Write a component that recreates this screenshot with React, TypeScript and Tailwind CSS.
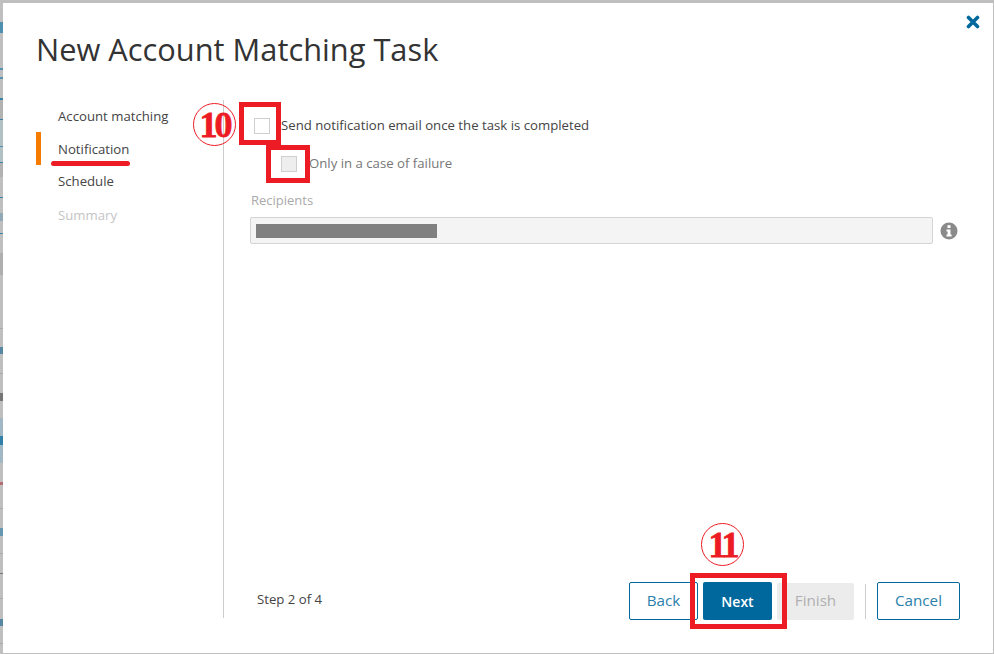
const font = "font-['Open_Sans',sans-serif]";

const slivers = [
  'top-[22px] h-[11px] bg-[#1f7aa8]',
  'top-[68px] h-[2px] bg-[#2a7fab]',
  'top-[77px] h-[2px] bg-[#2a7fab]',
  'top-[98px] h-[2px] bg-[#00689d]',
  'top-[100px] h-[19px] bg-[#adadad]',
  'top-[119px] h-px bg-[#00689d]',
  'top-[120px] h-[42px] bg-[#a9c0c4]',
  'top-[146px] h-px bg-[#2a7fab]',
  'top-[162px] h-px bg-[#00689d]',
  'top-[163px] h-[14px] bg-[#adadad]',
  'top-[197px] h-px bg-[#00689d]',
  'top-[213px] h-[8px] bg-[#7f9fb0]',
  'top-[233px] h-px bg-[#00689d]',
  'top-[253px] h-[22px] bg-[#a8a8a8]',
  'top-[328px] h-px bg-[#a0a0a0]',
  'top-[347px] h-[7px] bg-[#2a6f95]',
  'top-[373px] h-px bg-[#a0a0a0]',
  'top-[393px] h-[8px] bg-[#555555]',
  'top-[418px] h-[45px] bg-[#94b3c4]',
  'top-[436px] h-[9px] bg-[#00689d]',
  'top-[482px] h-[3px] bg-[#b04a50]',
  'top-[508px] h-px bg-[#a0a0a0]',
  'top-[528px] h-[8px] bg-[#3f86aa]',
  'top-[553px] h-px bg-[#a0a0a0]',
  'top-[573px] h-px bg-[#555555]',
  'top-[598px] h-px bg-[#a0a0a0]',
  'top-[619px] h-[7px] bg-[#2a6f95]',
  'top-[643px] h-px bg-[#a0a0a0]',
];

function Circled({ n, className }: { n: string; className: string }) {
  return (
    <div className={`absolute w-[43px] h-[43px] rounded-full border-[1.5px] border-[#ed1c24] flex items-center justify-center text-[#ed1c24] text-[36px] font-bold tracking-[-3px] font-['Liberation_Serif',serif] [-webkit-text-stroke:0.8px_#ed1c24] ${className}`}>
      {n}
    </div>
  );
}

function Box({ className }: { className: string }) {
  return <div className={`absolute border-[5px] border-[#ed1c24] ${className}`} />;
}

function Check({ disabled }: { disabled?: boolean }) {
  return <div className={`w-4 h-4 border border-[#cfcfcf] shrink-0 ${disabled ? 'bg-[#eeeeee]' : 'bg-white'}`} />;
}

export default function App() {
  return (
    <div className={`relative w-[994px] h-[654px] bg-[#bfbfbf] overflow-hidden pt-[3px] pl-[3px] pr-px pb-px ${font}`}>
      {slivers.map((s) => (
        <div key={s} className={`absolute left-0 w-[3px] opacity-70 ${s}`} />
      ))}
      <div className="relative w-full h-full bg-white flex flex-col">
        <div className="flex justify-between pl-[33px] pr-[13px] h-[97px] shrink-0">
          <h1 className="text-[30.8px] leading-[40px] mt-[26px] text-[#333333]">New Account Matching Task</h1>
          <svg className="mt-[12px]" width="14" height="14" viewBox="0 0 14 14">
            <path d="M2.5 2.5 L11.5 11.5 M11.5 2.5 L2.5 11.5" stroke="#00689d" strokeWidth="3.6" strokeLinecap="round" />
          </svg>
        </div>
        <div className="flex flex-1 pb-[35px]">
          <nav className="w-[188px] ml-[33px] text-[13.2px] leading-[18px] text-[#444444] shrink-0 border-r border-[#cccccc]">
            <div className="pl-[22px] h-[32px] pt-[7px]">Account matching</div>
            <div className="pl-[17px] border-l-[5px] border-[#f57c00] h-[33px] pt-[8px]">Notification</div>
            <div className="pl-[22px] h-[33px] pt-[7px]">Schedule</div>
            <div className="pl-[22px] h-[33px] pt-[8px] text-[#c4c4c4]">Summary</div>
          </nav>
          <div className="flex-1 flex flex-col pl-[26px] pr-[35px] pt-[17px]">
            <div className="flex items-center h-[18px] ml-[4px] text-[13.2px] text-[#444444] gap-[11px]">
              <Check />
              <span>Send notification email once the task is completed</span>
            </div>
            <div className="flex items-center h-[18px] mt-[20px] ml-[31px] text-[13.2px] text-[#777777] gap-[12px]">
              <Check disabled />
              <span>Only in a case of failure</span>
            </div>
            <label className="text-[13px] leading-[18px] text-[#aaaaaa] mt-[18px] ml-px">Recipients</label>
            <div className="flex items-center gap-[7px] mt-[8px]">
              <div className="flex-1 h-[27px] bg-[#f4f4f4] border border-[#d4d4d4] rounded-[2px] flex items-center pl-[5px]">
                <div className="w-[181px] h-[14px] bg-[#808080]" />
              </div>
              <svg width="18" height="18" viewBox="0 0 18 18">
                <circle cx="9" cy="9" r="8.5" fill="#8a8a8a" />
                <rect x="7.5" y="3.2" width="3" height="2.8" fill="#fff" />
                <path d="M6.5 7.4 H10.5 V12.4 H11.6 V14.4 H6.5 V12.4 H7.6 V9.4 H6.5 Z" fill="#fff" />
              </svg>
            </div>
          </div>
        </div>
        <div className="absolute left-[254px] top-[587px] text-[13.2px] leading-[18px] text-[#444444]">Step 2 of 4</div>
        <div className="absolute right-[33px] top-[579px] flex items-center text-[15.2px]">
          <button className="w-[69px] h-[38px] pb-[2px] border border-[#00689d] rounded-[2px] text-[#2a7fab] bg-white">Back</button>
          <button className="w-[69px] h-[38px] ml-[5px] rounded-[2px] bg-[#00689d] text-white text-[14px] font-semibold">Next</button>
          <button className="w-[77px] h-[37px] ml-[5px] pb-[2px] rounded-[2px] bg-[#ececec] text-[#b0b0b0]">Finish</button>
          <div className="w-px h-[35px] bg-[#cccccc] ml-[11px]" />
          <button className="w-[83px] h-[38px] pb-[2px] ml-[11px] border border-[#00689d] rounded-[2px] text-[#2a7fab] bg-white">Cancel</button>
        </div>
      </div>
      <div className="absolute left-[51px] top-[161px] w-[79px] h-[5px] rounded-full bg-[#ed1c24]" />
      <Circled n="10" className="left-[193px] top-[103px]" />
      <Circled n="11" className="left-[701px] top-[523px]" />
      <Box className="left-[239px] top-[102px] w-[42px] h-[43px]" />
      <Box className="left-[266px] top-[145px] w-[44px] h-[38px]" />
      <Box className="left-[690px] top-[573px] w-[97px] h-[56px]" />
    </div>
  );
}
